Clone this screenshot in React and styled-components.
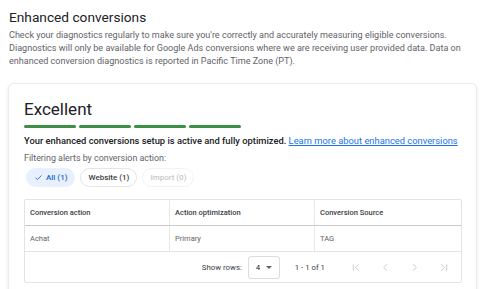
import React from "react";
import styled, { createGlobalStyle } from "styled-components";

const GlobalStyle = createGlobalStyle`
  html, body {
    margin: 0;
    padding: 0;
    background: #ffffff;
  }
  body {
    font-family: Roboto, "Liberation Sans", Arial, sans-serif;
    color: #202124;
    -webkit-font-smoothing: antialiased;
  }
`;

const rows = [{ action: "Achat", optimization: "Primary", source: "TAG" }];

const filters = [
  { label: "All (1)", selected: true },
  { label: "Website (1)" },
  { label: "Import (0)", disabled: true },
];

const CheckIcon = () => (
  <svg width="9" height="9" viewBox="0 0 24 24" fill="none" stroke="#1967d2" strokeWidth="2.4">
    <path d="M4 12.5l5 5L20 6.5" />
  </svg>
);

const PagerIcon = ({ kind }) => {
  const paths = {
    first: ["M5 5v14", "M17 5l-7 7 7 7"],
    prev: ["M15 5l-7 7 7 7"],
    next: ["M9 5l7 7-7 7"],
    last: ["M19 5v14", "M7 5l7 7-7 7"],
  };
  return (
    <svg width="11" height="11" viewBox="0 0 24 24" fill="none" stroke="#bdc1c6" strokeWidth="1.8">
      {paths[kind].map((d) => (
        <path key={d} d={d} />
      ))}
    </svg>
  );
};

const App = () => {
  return (
    <Page>
      <GlobalStyle />
      <Title>Enhanced conversions</Title>
      <Intro>
        Check your diagnostics regularly to make sure you're correctly and accurately measuring eligible conversions.
        Diagnostics will only be available for Google Ads conversions where we are receiving user provided data. Data on
        enhanced conversion diagnostics is reported in Pacific Time Zone (PT).
      </Intro>

      <Card>
        <Status>Excellent</Status>
        <Meter>
          {[0, 1, 2, 3].map((i) => (
            <MeterBar key={i} />
          ))}
        </Meter>
        <Summary>
          Your enhanced conversions setup is active and fully optimized. <Link>Learn more about enhanced conversions</Link>
        </Summary>
        <FilterLabel>Filtering alerts by conversion action:</FilterLabel>
        <Chips>
          {filters.map((f) => (
            <Chip key={f.label} $selected={f.selected} $disabled={f.disabled}>
              {f.selected && <CheckIcon />}
              {f.label}
            </Chip>
          ))}
        </Chips>

        <Table>
          <HeadRow>
            <HeadCell>Conversion action</HeadCell>
            <HeadCell>Action optimization</HeadCell>
            <HeadCell $last>Conversion Source</HeadCell>
          </HeadRow>
          {rows.map((r) => (
            <BodyRow key={r.action}>
              <Cell>{r.action}</Cell>
              <Cell>{r.optimization}</Cell>
              <Cell $last>{r.source}</Cell>
            </BodyRow>
          ))}
          <Footer>
            <span>Show rows:</span>
            <Select>
              4
              <Caret />
            </Select>
            <Range>1 - 1 of 1</Range>
            <Pager>
              <PagerIcon kind="first" />
              <PagerIcon kind="prev" />
              <PagerIcon kind="next" />
              <PagerIcon kind="last" />
            </Pager>
          </Footer>
        </Table>
      </Card>
    </Page>
  );
};

export default App;

const Page = styled.div`
  padding: 7px 3px 0 8px;
  height: 289px;
  box-sizing: border-box;
  overflow: hidden;
`;

const Title = styled.h1`
  margin: 0 0 0 1px;
  font-size: 13.7px;
  line-height: 20px;
  font-weight: 400;
  color: #202124;
`;

const Intro = styled.p`
  margin: 2px 0 0 1px;
  max-width: 462px;
  font-size: 9.05px;
  line-height: 13px;
  color: #5f6368;
`;

const Card = styled.div`
  margin-top: 15px;
  border: 1px solid #ececec;
  border-radius: 6px;
  box-shadow: 0 1px 3px rgba(60, 64, 67, 0.15);
  padding: 14px 14px 20px 15px;
  background: #fff;
`;

const Status = styled.div`
  font-size: 17px;
  line-height: 22px;
  color: #202124;
`;

const Meter = styled.div`
  display: flex;
  gap: 3px;
  margin-top: 5px;
`;

const MeterBar = styled.div`
  width: 52px;
  height: 3px;
  border-radius: 2px;
  background: #3c8f45;
`;

const Summary = styled.div`
  margin-top: 6px;
  font-size: 9.35px;
  line-height: 13px;
  font-weight: 500;
  color: #202124;
  white-space: nowrap;
`;

const Link = styled.a`
  color: #1a73e8;
  font-weight: 400;
  text-decoration: underline;
  cursor: pointer;
`;

const FilterLabel = styled.div`
  margin-top: 5px;
  font-size: 8.9px;
  line-height: 13px;
  color: #5f6368;
`;

const Chips = styled.div`
  display: flex;
  gap: 5px;
  margin: 3px 0 0 2px;
`;

const Chip = styled.div`
  display: flex;
  align-items: center;
  gap: 3px;
  height: 19px;
  box-sizing: border-box;
  padding: 0 7px;
  border-radius: 10px;
  font-size: 8px;
  font-weight: 500;
  border: 1px solid ${(p) => (p.$selected ? "#e8f0fe" : p.$disabled ? "#f1f3f4" : "#e3e5e8")};
  background: ${(p) => (p.$selected ? "#e8f0fe" : "#fff")};
  color: ${(p) => (p.$selected ? "#1967d2" : p.$disabled ? "#c4c7cb" : "#3c4043")};
`;

const Table = styled.div`
  margin-top: 12px;
  border: 1px solid #e3e3e3;
  border-radius: 2px;
`;

const HeadRow = styled.div`
  display: grid;
  grid-template-columns: 145px 145px 1fr;
  height: 25px;
  border-bottom: 1px solid #c9c9c9;
`;

const BodyRow = styled.div`
  display: grid;
  grid-template-columns: 145px 145px 1fr;
  height: 25px;
  border-bottom: 1px solid #e3e3e3;
`;

const HeadCell = styled.div`
  display: flex;
  align-items: center;
  padding-left: 5px;
  font-size: 7.5px;
  font-weight: 500;
  color: #3c4043;
  border-right: ${(p) => (p.$last ? "none" : "1px solid #e8e8e8")};
`;

const Cell = styled.div`
  display: flex;
  align-items: center;
  padding-left: 5px;
  font-size: 7.5px;
  color: #5f6368;
  border-right: ${(p) => (p.$last ? "none" : "1px solid #e8e8e8")};
`;

const Footer = styled.div`
  display: flex;
  align-items: center;
  justify-content: flex-end;
  height: 30px;
  padding-right: 12px;
  font-size: 7.8px;
  color: #3c4043;
`;

const Select = styled.div`
  display: flex;
  align-items: center;
  gap: 6px;
  width: 32px;
  height: 23px;
  box-sizing: border-box;
  margin-left: 6px;
  padding-left: 7px;
  border: 1px solid #dadce0;
  border-radius: 3px;
  color: #202124;
`;

const Caret = styled.span`
  width: 0;
  height: 0;
  border-left: 3px solid transparent;
  border-right: 3px solid transparent;
  border-top: 3px solid #5f6368;
`;

const Range = styled.span`
  margin-left: 15px;
  color: #3c4043;
`;

const Pager = styled.div`
  display: flex;
  align-items: center;
  gap: 18px;
  margin-left: 26px;
`;
